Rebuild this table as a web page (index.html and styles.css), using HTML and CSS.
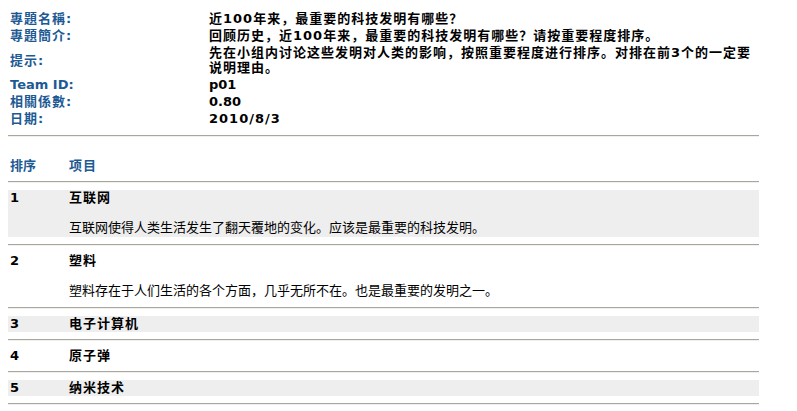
FILE: index.html
```html
<!DOCTYPE html>
<html lang="zh-CN">
<head>
    <meta charset="UTF-8">
    <title>专题排序</title>
    <link rel="stylesheet" href="styles.css">
</head>
<body>

    <div class="page">
        <div class="info">
            <div class="label">專題名稱:</div>
            <div class="value">近100年来，最重要的科技发明有哪些？</div>
            <div class="label">專題簡介:</div>
            <div class="value">回顾历史，近100年来，最重要的科技发明有哪些？请按重要程度排序。</div>
            <div class="label">提示:</div>
            <div class="value">先在小组内讨论这些发明对人类的影响，按照重要程度进行排序。对排在前3个的一定要说明理由。</div>
            <div class="label latin">Team ID:</div>
            <div class="value latin">p01</div>
            <div class="label">相關係數:</div>
            <div class="value latin">0.80</div>
            <div class="label">日期:</div>
            <div class="value">2010/8/3</div>
        </div>

        <div class="rule"></div>

        <div class="list-head">
            <div class="num">排序</div>
            <div class="item">项目</div>
        </div>

        <div class="rule"></div>

        <div class="row odd">
            <div class="num">1</div>
            <div class="item">
                <div class="title">互联网</div>
                <div class="desc">互联网使得人类生活发生了翻天覆地的变化。应该是最重要的科技发明。</div>
            </div>
        </div>
        <div class="rule"></div>

        <div class="row">
            <div class="num">2</div>
            <div class="item">
                <div class="title">塑料</div>
                <div class="desc">塑料存在于人们生活的各个方面，几乎无所不在。也是最重要的发明之一。</div>
            </div>
        </div>
        <div class="rule"></div>

        <div class="row odd">
            <div class="num">3</div>
            <div class="item">
                <div class="title">电子计算机</div>
            </div>
        </div>
        <div class="rule"></div>

        <div class="row">
            <div class="num">4</div>
            <div class="item">
                <div class="title">原子弹</div>
            </div>
        </div>
        <div class="rule"></div>

        <div class="row odd">
            <div class="num">5</div>
            <div class="item">
                <div class="title">纳米技术</div>
            </div>
        </div>
        <div class="rule"></div>
    </div>

</body>
</html>
```

FILE: styles.css
```css
body {
    margin: 0;
    padding: 10px 8px 0;
    background: #fff;
    color: #000;
    font-family: "DejaVu Sans", "Noto Sans CJK SC", sans-serif;
    font-size: 12px;
    line-height: 16px;
}
.page {
    width: 751px;
}
.info {
    display: grid;
    grid-template-columns: 201px 1fr;
    align-items: center;
    font-size: 13px;
    line-height: 15px;
    font-weight: bold;
    letter-spacing: 1px;
}
.info > div {
    padding: 1px 0;
}
.label {
    padding-left: 2px !important;
    color: #1d5a94;
}
.info .latin {
    letter-spacing: 0;
}
.rule {
    height: 1px;
    background: #a7a7a0;
    border-bottom: 1px solid #f1f1ea;
}
.info + .rule {
    margin-top: 8px;
}
.list-head {
    display: flex;
    margin: 21px 0 7px;
    color: #1d5a94;
}
.num {
    width: 59px;
    padding-left: 2px;
    font-size: 13px;
    font-weight: bold;
}
.list-head .item,
.title {
    font-size: 13px;
    font-weight: bold;
    letter-spacing: 1px;
}
.item {
    flex: 1;
}
.row {
    display: flex;
    margin: 7px 0;
}
.row.odd {
    background: #eeeeee;
}
.desc {
    margin: 14px 0 1px;
    font-size: 13px;
}
```
